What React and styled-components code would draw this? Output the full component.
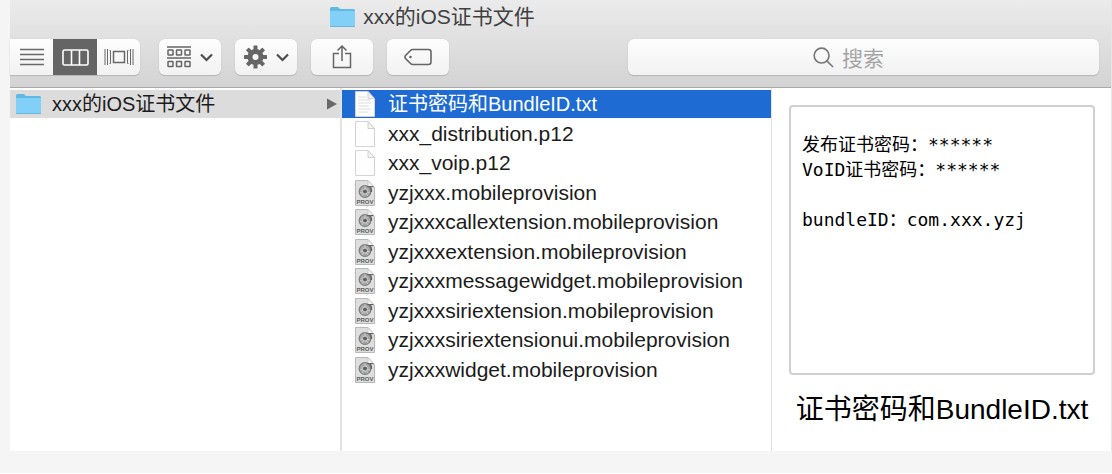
import { useState } from "react";
import styled, { createGlobalStyle, css } from "styled-components";

const GlobalStyle = createGlobalStyle`
  *, *::before, *::after {
    box-sizing: border-box;
  }

  body {
    margin: 0;
    background: #fff;
    font-family: "Liberation Sans", "Noto Sans CJK SC", sans-serif;
  }

  button, input {
    margin: 0;
    padding: 0;
    border: 0;
    background: none;
    color: inherit;
    font: inherit;
  }

  svg {
    display: block;
    flex: none;
  }
`;

const Page = styled.div`
  padding: 0 0 22px 10px;
  background: #f5f5f5;
`;

const Window = styled.main`
  background: #fff;
  border-right: 1px solid #e6e6e6;
`;

const Header = styled.header`
  background: linear-gradient(#ebebec, #d3d3d4);
  border-bottom: 1px solid #a9a9aa;
`;

const Title = styled.h1`
  display: flex;
  align-items: center;
  justify-content: center;
  gap: 8px;
  height: 39px;
  margin: 0;
  padding: 0 256px 6px 0;
  color: #3f3f41;
  font-size: 21px;
  font-weight: 400;
  line-height: 28px;
  white-space: nowrap;
`;

const Toolbar = styled.div`
  display: flex;
  gap: 14px;
  padding: 0 12px 12px 0;
`;

const raised = css`
  background: linear-gradient(#fdfdfd, #f2f2f2);
  box-shadow: 0 0 1px #b4b4b4, 0 1px 1px #b4b4b4;
`;

const Segments = styled.div`
  ${raised}
  display: flex;
  height: 36px;
  margin-right: 5px;
  border-radius: 0 6px 6px 0;
  overflow: hidden;
`;

const Segment = styled.button`
  display: flex;
  align-items: center;
  justify-content: center;
  width: ${({ $active }) => ($active ? 44 : 43)}px;
  background: ${({ $active }) => ($active ? "#656566" : "transparent")};
  color: ${({ $active }) => ($active ? "#fff" : "#69696a")};
`;

const ToolButton = styled.button`
  ${raised}
  display: flex;
  align-items: center;
  justify-content: center;
  gap: 9px;
  width: 62px;
  height: 36px;
  border-radius: 6px;
  color: #666667;
`;

const Search = styled.label`
  ${raised}
  display: flex;
  flex: 1;
  align-items: center;
  justify-content: center;
  gap: 8px;
  height: 36px;
  margin-left: 165px;
  border-radius: 6px;
  color: #77777a;
`;

const SearchInput = styled.input`
  width: 72px;
  field-sizing: content;
  color: #333;
  font-size: 21px;
  line-height: 28px;
  outline: none;

  &::placeholder {
    color: #a4a4a5;
    opacity: 1;
  }
`;

const Columns = styled.div`
  display: grid;
  grid-template-columns: 332fr 430fr 339fr;
  min-height: 363px;
`;

const Column = styled.nav`
  padding-top: 2px;
  border-right: ${({ $divider }) => $divider}px solid #e3e3e3;
`;

const List = styled.ul`
  display: flex;
  flex-direction: column;
  justify-content: space-between;
  min-height: ${({ $height }) => $height}px;
  margin: 0;
  padding: 0;
  list-style: none;
`;

const Row = styled.button`
  display: flex;
  align-items: center;
  width: 100%;
  height: 28px;
  font-size: 20px;
  line-height: 28px;
  text-align: left;
  white-space: nowrap;
`;

const FolderRow = styled(Row)`
  gap: 11px;
  padding: 0 2px 0 6px;
  background: #dcdcdc;
  color: #1c1c1c;
`;

const FileRow = styled(Row)`
  gap: 13px;
  padding-left: 13px;
  background: ${({ $selected }) => ($selected ? "#1e6bd3" : "transparent")};
  color: ${({ $selected }) => ($selected ? "#fff" : "#1c1c1c")};
  font-size: ${({ $wide }) => ($wide ? 20 : 21)}px;
`;

const RowName = styled.span`
  flex: 1;
`;

const Preview = styled.section`
  padding: 17px 16px 0 17px;
`;

const PreviewText = styled.pre`
  height: 270px;
  margin: 0;
  padding: 25px 11px;
  border: 2px solid #d0d0d0;
  border-radius: 4px;
  color: #000;
  font-family: "DejaVu Sans Mono", "Noto Sans CJK SC", monospace;
  font-size: 18px;
  line-height: 25px;
`;

const PreviewName = styled.h2`
  margin: 14px 0 0;
  color: #000;
  font-size: 28px;
  font-weight: 400;
  line-height: 42px;
  text-align: center;
  white-space: nowrap;
`;

const FolderIcon = () => (
  <svg width="25" height="22" viewBox="0 0 25 22" aria-hidden="true">
    <path d="M0 2.500Q0 1 1.500 1H8l2 2h13.500Q25 3 25 4.500V20H0z" fill="#5fb9e2" />
    <path d="M0 5h25V20q0 1-1 1H1q-1 0-1-1z" fill="#82d0f8" />
    <path d="M0 20h25q0 1-1 1H1q-1 0-1-1z" fill="#66b5dc" />
  </svg>
);

const ListIcon = () => (
  <svg width="24" height="18" viewBox="0 0 24 18" stroke="currentColor" strokeWidth="1.600" aria-hidden="true">
    <path d="M0 1.500h24M0 6.500h24M0 11.500h24M0 16.500h24" />
  </svg>
);

const ColumnsIcon = () => (
  <svg width="27" height="17" viewBox="0 0 27 17" fill="none" stroke="currentColor" strokeWidth="1.600" aria-hidden="true">
    <rect x="1" y="1" width="25" height="15" rx="1.500" />
    <path d="M9.500 1v15M17.500 1v15" strokeWidth="1.600" />
  </svg>
);

const CoverFlowIcon = () => (
  <svg width="30" height="18" viewBox="0 0 30 18" fill="none" stroke="currentColor" strokeWidth="1.200" aria-hidden="true">
    <rect x="9.500" y="3.500" width="11" height="11" strokeWidth="1.500" />
    <path d="M1 1v16M3.500 1v16M26.500 1v16M29 1v16M5.500 2.500h1v2M5.500 15.500h1v-2M24.500 2.500h-1v2M24.500 15.500h-1v-2M6.500 4v10M23.500 4v10" strokeWidth="1" />
  </svg>
);

const ArrangeIcon = () => (
  <svg width="24" height="22" viewBox="0 0 24 22" fill="none" stroke="currentColor" strokeWidth="1.500" aria-hidden="true">
    <path d="M0 1h24M0 12h24" />
    {[4, 15.5].map((y) =>
      [1, 9.5, 18].map((x) => (
        <rect key={`${x}-${y}`} x={x} y={y} width="5" height="5" rx="0.500" />
      ))
    )}
  </svg>
);

const GearIcon = () => (
  <svg width="23" height="24" viewBox="-11.500 -12 23 24" aria-hidden="true">
    {[0, 45, 90, 135].map((angle) => (
      <rect key={angle} x="-2" y="-11.500" width="4" height="23" rx="0.600" fill="currentColor" transform={`rotate(${angle})`} />
    ))}
    <circle r="8" fill="currentColor" />
    <circle r="3" fill="#f8f8f8" />
  </svg>
);

const ChevronIcon = () => (
  <svg width="13" height="9" viewBox="0 0 13 9" fill="none" stroke="#4d4d4e" strokeWidth="2.200" aria-hidden="true">
    <path d="M1 1.500l5.500 5.500L12 1.500" />
  </svg>
);

const ShareIcon = () => (
  <svg width="20" height="26" viewBox="0 0 20 26" fill="none" stroke="currentColor" strokeWidth="1.500" aria-hidden="true">
    <path d="M7 9.500H1.500v14h17v-14H13M10 17V2M5.500 6.500L10 2l4.500 4.500" />
  </svg>
);

const TagIcon = () => (
  <svg width="28" height="18" viewBox="0 0 28 18" fill="none" stroke="currentColor" strokeWidth="1.600" aria-hidden="true">
    <path d="M8.500 1.500H24.500Q27 1.500 27 4v10q0 2.500-2.500 2.500H8.500Q7.500 16.500 6.500 15.500L1.500 10.500Q.500 9 1.500 7.500L6.500 2.500Q7.500 1.500 8.500 1.500z" />
    <circle cx="6.500" cy="9" r="1.300" fill="currentColor" stroke="none" />
  </svg>
);

const SearchIcon = () => (
  <svg width="21" height="21" viewBox="0 0 22 22" fill="none" stroke="currentColor" strokeWidth="1.700" aria-hidden="true">
    <circle cx="9" cy="9" r="7.800" />
    <path d="M14.500 14.500l6.500 6.500" />
  </svg>
);

const ArrowIcon = () => (
  <svg width="12" height="12" viewBox="0 0 12 12" fill="#69696a" aria-hidden="true">
    <path d="M1 0.500L11 6 1 11.500z" />
  </svg>
);

const FileIcon = ({ type }) => (
  <svg width="20" height="26" viewBox="0 0 20 26" fill="none" aria-hidden="true">
    <path
      d="M.500.500H13L19.500 7.500V25.500H.500z"
      fill={type === "prov" ? "#dedede" : "#fefefe"}
      stroke={type === "prov" ? "#b8b8b8" : "#d4d4d4"}
    />
    {type === "txt" && (
      <path d="M3 6h8M3 9h12M3 12h13M3 15h11M3 18h13M3 21h10" stroke="#d6d6d6" strokeWidth="0.800" />
    )}
    <path d="M13 .500V7.500H19.500z" fill="#f4f4f4" stroke="#c6c6c6" strokeWidth="0.800" />
    {type === "prov" && (
      <>
        <circle cx="10" cy="11.500" r="5.800" fill="#a8a8a8" stroke="#7d7d7d" strokeWidth="1.300" />
        <circle cx="10" cy="11.500" r="2.500" fill="#606060" stroke="#d0d0d0" />
        <path d="M10 6v3M5 13l3-1M15 13l-3-1M7 16l2-3M13 16l-2-3" stroke="#d2d2d2" strokeWidth="0.800" />
        <path d="M12 6.500h6.500M14.500 6.500q2.500 2 2 5.500" stroke="#636363" strokeWidth="1.200" />
        <text x="10" y="24" fill="#5c5c5c" fontFamily="Liberation Sans, sans-serif" fontSize="6" fontWeight="700" textAnchor="middle">
          PROV
        </text>
      </>
    )}
  </svg>
);

const folder = "xxx的iOS证书文件";

const files = [
  { name: "证书密码和BundleID.txt", type: "txt" },
  { name: "xxx_distribution.p12", type: "blank" },
  { name: "xxx_voip.p12", type: "blank" },
  { name: "yzjxxx.mobileprovision", type: "prov" },
  { name: "yzjxxxcallextension.mobileprovision", type: "prov" },
  { name: "yzjxxxextension.mobileprovision", type: "prov" },
  { name: "yzjxxxmessagewidget.mobileprovision", type: "prov" },
  { name: "yzjxxxsiriextension.mobileprovision", type: "prov" },
  { name: "yzjxxxsiriextensionui.mobileprovision", type: "prov" },
  { name: "yzjxxxwidget.mobileprovision", type: "prov" },
];

const views = [
  { id: "list", label: "列表", Icon: ListIcon },
  { id: "columns", label: "分栏", Icon: ColumnsIcon },
  { id: "flow", label: "封面流", Icon: CoverFlowIcon },
];

const content = `发布证书密码：******
VoID证书密码：******

bundleID：com.xxx.yzj`;

export default function App() {
  const [view, setView] = useState("columns");
  const [selected, setSelected] = useState(files[0].name);

  return (
    <>
      <GlobalStyle />
      <Page>
        <Window>
          <Header>
            <Title>
              <FolderIcon />
              {folder}
            </Title>
            <Toolbar>
              <Segments>
                {views.map(({ id, label, Icon }) => (
                  <Segment key={id} type="button" aria-label={label} $active={view === id} onClick={() => setView(id)}>
                    <Icon />
                  </Segment>
                ))}
              </Segments>
              <ToolButton type="button" aria-label="排列">
                <ArrangeIcon />
                <ChevronIcon />
              </ToolButton>
              <ToolButton type="button" aria-label="操作">
                <GearIcon />
                <ChevronIcon />
              </ToolButton>
              <ToolButton type="button" aria-label="共享">
                <ShareIcon />
              </ToolButton>
              <ToolButton type="button" aria-label="标签">
                <TagIcon />
              </ToolButton>
              <Search>
                <SearchIcon />
                <SearchInput type="text" placeholder="搜索" aria-label="搜索" />
              </Search>
            </Toolbar>
          </Header>

          <Columns>
            <Column $divider={2}>
              <List $height={28}>
                <li>
                  <FolderRow type="button">
                    <FolderIcon />
                    <RowName>{folder}</RowName>
                    <ArrowIcon />
                  </FolderRow>
                </li>
              </List>
            </Column>
            <Column $divider={1}>
              <List $height={294}>
                {files.map(({ name, type }) => (
                  <li key={name}>
                    <FileRow
                      type="button"
                      $selected={selected === name}
                      $wide={type === "txt"}
                      onClick={() => setSelected(name)}
                    >
                      <FileIcon type={type} />
                      <RowName>{name}</RowName>
                    </FileRow>
                  </li>
                ))}
              </List>
            </Column>
            <Preview>
              <PreviewText>{content}</PreviewText>
              <PreviewName>{selected}</PreviewName>
            </Preview>
          </Columns>
        </Window>
      </Page>
    </>
  );
}
